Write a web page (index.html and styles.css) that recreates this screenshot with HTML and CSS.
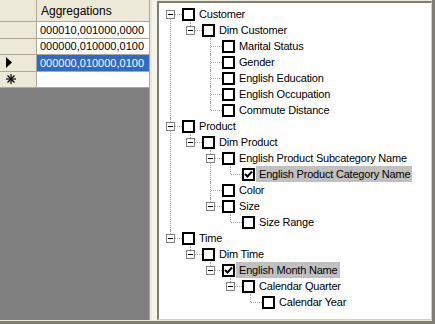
FILE: index.html
```html
<!DOCTYPE html>
<html lang="en">
<head>
    <meta charset="UTF-8">
    <title>Aggregation Design</title>
    <link rel="stylesheet" href="styles.css">
</head>
<body>
    <div class="window">
        <!-- Grid of aggregations -->
        <div class="grid-pane">
            <div class="grid-row grid-head">
                <div class="row-head"></div>
                <div class="cell">Aggregations</div>
            </div>
            <div class="grid-row">
                <div class="row-head"></div>
                <div class="cell">000010,001000,0000</div>
            </div>
            <div class="grid-row">
                <div class="row-head"></div>
                <div class="cell">000000,010000,0100</div>
            </div>
            <div class="grid-row">
                <div class="row-head">
                    <svg width="6" height="11" viewBox="0 0 6 11"><polygon points="0,0 6,5.5 0,11" fill="#000"/></svg>
                </div>
                <div class="cell selected">000000,010000,0100</div>
            </div>
            <div class="grid-row">
                <div class="row-head">
                    <svg width="10" height="10" viewBox="0 0 10 10" stroke="#000" stroke-width="1.2">
                        <line x1="5" y1="0" x2="5" y2="10"/>
                        <line x1="0" y1="5" x2="10" y2="5"/>
                        <line x1="1.5" y1="1.5" x2="8.5" y2="8.5"/>
                        <line x1="8.5" y1="1.5" x2="1.5" y2="8.5"/>
                    </svg>
                </div>
                <div class="cell"></div>
            </div>
        </div>

        <div class="splitter"></div>

        <!-- Dimension tree -->
        <div class="tree-pane">
            <ul class="tree">
                <li>
                    <div class="node"><span class="toggle"></span><span class="check"></span><span class="label">Customer</span></div>
                    <ul>
                        <li>
                            <div class="node"><span class="toggle"></span><span class="check"></span><span class="label">Dim Customer</span></div>
                            <ul>
                                <li><div class="node"><span class="check"></span><span class="label">Marital Status</span></div></li>
                                <li><div class="node"><span class="check"></span><span class="label">Gender</span></div></li>
                                <li><div class="node"><span class="check"></span><span class="label">English Education</span></div></li>
                                <li><div class="node"><span class="check"></span><span class="label">English Occupation</span></div></li>
                                <li><div class="node"><span class="check"></span><span class="label">Commute Distance</span></div></li>
                            </ul>
                        </li>
                    </ul>
                </li>
                <li>
                    <div class="node"><span class="toggle"></span><span class="check"></span><span class="label">Product</span></div>
                    <ul>
                        <li>
                            <div class="node"><span class="toggle"></span><span class="check"></span><span class="label">Dim Product</span></div>
                            <ul>
                                <li>
                                    <div class="node"><span class="toggle"></span><span class="check"></span><span class="label">English Product Subcategory Name</span></div>
                                    <ul>
                                        <li><div class="node"><span class="check checked"><svg width="9" height="9" viewBox="0 0 9 9"><polyline points="1,4 3.5,6.5 8,1.5" fill="none" stroke="#000" stroke-width="2"/></svg></span><span class="label sel">English Product Category Name</span></div></li>
                                    </ul>
                                </li>
                                <li><div class="node"><span class="check"></span><span class="label">Color</span></div></li>
                                <li>
                                    <div class="node"><span class="toggle"></span><span class="check"></span><span class="label">Size</span></div>
                                    <ul>
                                        <li><div class="node"><span class="check"></span><span class="label">Size Range</span></div></li>
                                    </ul>
                                </li>
                            </ul>
                        </li>
                    </ul>
                </li>
                <li>
                    <div class="node"><span class="toggle"></span><span class="check"></span><span class="label">Time</span></div>
                    <ul>
                        <li>
                            <div class="node"><span class="toggle"></span><span class="check"></span><span class="label">Dim Time</span></div>
                            <ul>
                                <li>
                                    <div class="node"><span class="toggle"></span><span class="check checked"><svg width="9" height="9" viewBox="0 0 9 9"><polyline points="1,4 3.5,6.5 8,1.5" fill="none" stroke="#000" stroke-width="2"/></svg></span><span class="label sel">English Month Name</span></div>
                                    <ul>
                                        <li>
                                            <div class="node"><span class="toggle"></span><span class="check"></span><span class="label">Calendar Quarter</span></div>
                                            <ul>
                                                <li><div class="node"><span class="check"></span><span class="label">Calendar Year</span></div></li>
                                            </ul>
                                        </li>
                                    </ul>
                                </li>
                            </ul>
                        </li>
                    </ul>
                </li>
            </ul>
        </div>
    </div>
</body>
</html>
```

FILE: styles.css
```css
* {
    margin: 0;
    padding: 0;
    box-sizing: border-box;
}

body {
    font-family: 'Liberation Sans', Arial, sans-serif;
    font-size: 11px;
    color: #000;
    background: #ece9d8;
}

.window {
    display: flex;
    width: 435px;
    height: 324px;
    background: #ece9d8;
    border-right: 3px solid #7f7d74;
    border-bottom: 3px solid #7f7d74;
    padding-bottom: 1px;
}

/* Grid */
.grid-pane {
    width: 150px;
    height: 100%;
    background: #808080;
    border-right: 1px solid #aca899;
}

.grid-row {
    display: flex;
    height: 16.5px;
    border-bottom: 1px solid #aca899;
}

.grid-head {
    height: 22px;
    background: #ece9d8;
}

.row-head {
    width: 37px;
    flex-shrink: 0;
    background: #ece9d8;
    border-right: 1px solid #aca899;
    display: flex;
    align-items: center;
    padding-left: 6px;
}

.cell {
    flex: 1;
    background: #fff;
    padding-left: 3px;
    display: flex;
    align-items: center;
    font-size: 11px;
    white-space: nowrap;
    overflow: hidden;
}

.grid-head .cell {
    background: #ece9d8;
    font-size: 12px;
    padding-left: 4px;
}

.cell.selected {
    background: #316ac5;
    color: #fff;
}

.splitter {
    width: 7px;
    background: linear-gradient(to right, #ece9d8 2px, #f5f4ea 2px);
}

/* Tree */
.tree-pane {
    flex: 1;
    margin-top: 1px;
    background: #fff;
    border-top: 2px solid #7f7d74;
    border-left: 2px solid #7f7d74;
    border-right: 1px solid #d4d0c8;
    border-bottom: 1px solid #d4d0c8;
    padding: 3px 0 0 2px;
    overflow: hidden;
}

.tree, .tree ul {
    list-style: none;
}

.tree ul {
    margin-left: 20px;
}

.tree li {
    position: relative;
}

.tree li::before {
    content: '';
    position: absolute;
    left: 9px;
    top: 0;
    bottom: 0;
    border-left: 1px dotted #a0a0a0;
}

.tree li:last-child::before {
    bottom: auto;
    height: 8px;
}

.tree > li:first-child::before {
    top: 8px;
}

.tree li::after {
    content: '';
    position: absolute;
    left: 10px;
    top: 8px;
    width: 11px;
    border-top: 1px dotted #a0a0a0;
}

.node {
    position: relative;
    z-index: 1;
    display: flex;
    align-items: center;
    height: 16px;
    padding-left: 21px;
}

.toggle {
    position: absolute;
    left: 5px;
    top: 4px;
    width: 9px;
    height: 9px;
    border: 1px solid #808080;
    background: #fff;
}

.toggle::before {
    content: '';
    position: absolute;
    left: 1px;
    top: 3px;
    width: 5px;
    height: 1px;
    background: #000;
}

.check {
    width: 13px;
    height: 13px;
    border: 2px solid #000;
    background: #fff;
    flex-shrink: 0;
    display: flex;
    align-items: center;
    justify-content: center;
}

.label {
    margin-left: 1px;
    padding: 0 2px 0 3px;
    height: 16px;
    line-height: 16px;
    letter-spacing: -0.2px;
    white-space: nowrap;
}

.label.sel {
    background: #c0c0c0;
}
```
